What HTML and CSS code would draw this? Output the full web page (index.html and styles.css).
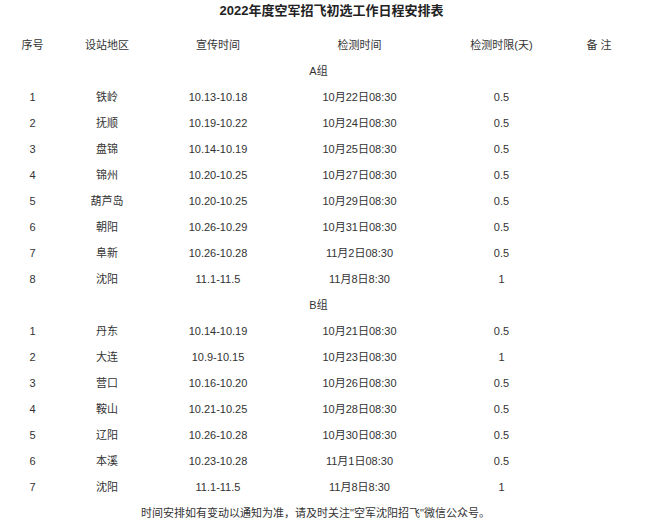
FILE: index.html
```html
<!DOCTYPE html>
<html lang="zh-CN">
<head>
<meta charset="utf-8">
<title>2022年度空军招飞初选工作日程安排表</title>
<link rel="stylesheet" href="styles.css">
</head>
<body>
<div class="page">
  <h1 class="title">2022年度空军招飞初选工作日程安排表</h1>
  <table class="schedule">
    <colgroup>
      <col class="c1"><col class="c2"><col class="c3"><col class="c4"><col class="c5"><col class="c6">
    </colgroup>
    <thead>
      <tr><th>序号</th><th>设站地区</th><th>宣传时间</th><th>检测时间</th><th>检测时限(天)</th><th>备 注</th></tr>
    </thead>
    <tbody>
      <tr class="group"><td colspan="6">A组</td></tr>
      <tr><td>1</td><td>铁岭</td><td>10.13-10.18</td><td>10月22日08:30</td><td>0.5</td><td></td></tr>
      <tr><td>2</td><td>抚顺</td><td>10.19-10.22</td><td>10月24日08:30</td><td>0.5</td><td></td></tr>
      <tr><td>3</td><td>盘锦</td><td>10.14-10.19</td><td>10月25日08:30</td><td>0.5</td><td></td></tr>
      <tr><td>4</td><td>锦州</td><td>10.20-10.25</td><td>10月27日08:30</td><td>0.5</td><td></td></tr>
      <tr><td>5</td><td>葫芦岛</td><td>10.20-10.25</td><td>10月29日08:30</td><td>0.5</td><td></td></tr>
      <tr><td>6</td><td>朝阳</td><td>10.26-10.29</td><td>10月31日08:30</td><td>0.5</td><td></td></tr>
      <tr><td>7</td><td>阜新</td><td>10.26-10.28</td><td>11月2日08:30</td><td>0.5</td><td></td></tr>
      <tr><td>8</td><td>沈阳</td><td>11.1-11.5</td><td>11月8日8:30</td><td>1</td><td></td></tr>
      <tr class="group"><td colspan="6">B组</td></tr>
      <tr><td>1</td><td>丹东</td><td>10.14-10.19</td><td>10月21日08:30</td><td>0.5</td><td></td></tr>
      <tr><td>2</td><td>大连</td><td>10.9-10.15</td><td>10月23日08:30</td><td>1</td><td></td></tr>
      <tr><td>3</td><td>营口</td><td>10.16-10.20</td><td>10月26日08:30</td><td>0.5</td><td></td></tr>
      <tr><td>4</td><td>鞍山</td><td>10.21-10.25</td><td>10月28日08:30</td><td>0.5</td><td></td></tr>
      <tr><td>5</td><td>辽阳</td><td>10.26-10.28</td><td>10月30日08:30</td><td>0.5</td><td></td></tr>
      <tr><td>6</td><td>本溪</td><td>10.23-10.28</td><td>11月1日08:30</td><td>0.5</td><td></td></tr>
      <tr><td>7</td><td>沈阳</td><td>11.1-11.5</td><td>11月8日8:30</td><td>1</td><td></td></tr>
    </tbody>
  </table>
  <p class="note">时间安排如有变动以通知为准，请及时关注"空军沈阳招飞"微信公众号。</p>
</div>
</body>
</html>
```
FILE: styles.css
```css
html, body {
  margin: 0;
  padding: 0;
  background: #ffffff;
}
body {
  font-family: "Liberation Sans", Arial, "Noto Sans CJK SC", sans-serif;
  font-size: 11px;
  color: #333333;
}
.page {
  width: 652px;
}
.title {
  margin: 0 0 10px 0;
  padding-left: 11px;
  font-size: 13px;
  line-height: 22px;
  font-weight: bold;
  text-align: center;
  color: #222222;
}
.schedule {
  margin-left: 5px;
  width: 627px;
  table-layout: fixed;
  border-collapse: collapse;
}
.c1 { width: 55px; }
.c2 { width: 94px; }
.c3 { width: 128px; }
.c4 { width: 155px; }
.c5 { width: 129px; }
.c6 { width: 66px; }
.schedule th,
.schedule td {
  height: 26px;
  padding: 0;
  text-align: center;
  vertical-align: middle;
  font-weight: normal;
  line-height: 14px;
}
.note {
  margin: 0;
  padding-right: 21px;
  line-height: 26px;
  text-align: center;
}
```
